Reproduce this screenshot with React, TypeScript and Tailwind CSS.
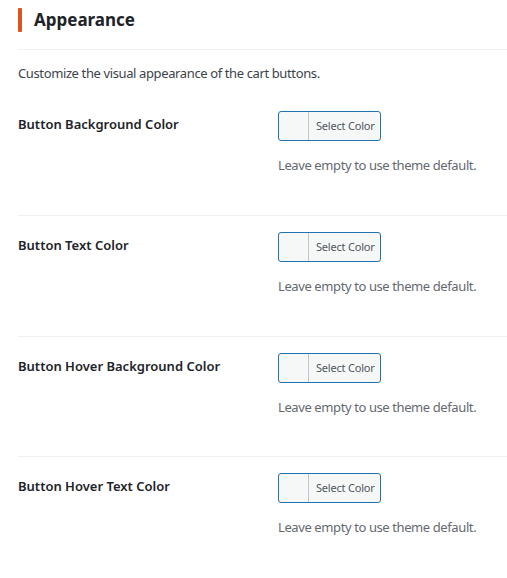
import React from "react";

const rows = [
  { label: "Button Background Color", h: "h-[121px]" },
  { label: "Button Text Color", h: "h-[121px]" },
  { label: "Button Hover Background Color", h: "h-[120px]" },
  { label: "Button Hover Text Color", h: "h-[121px]" },
];

function ColorButton() {
  return (
    <div className="flex h-[30px] w-[103px] overflow-hidden rounded-[3px] border border-[#2271b1] bg-[#f6f7f7]">
      <div className="w-[30px] border-r border-[#c3c4c7]" />
      <div className="flex flex-1 items-center pl-[7px] text-[11px] tracking-[-0.2px] text-[#50575e]">Select Color</div>
    </div>
  );
}

export default function App() {
  return (
    <div className="min-h-[578px] bg-white pl-[18px]" style={{ fontFamily: '"Noto Sans", "Open Sans", sans-serif' }}>
      <div className="flex items-center gap-[12px] border-b border-[#f0f0f1] pt-[8px] pb-[17px]">
        <div className="h-[24px] w-[4px] rounded-[1px] bg-[#d9541e]" />
        <h2 className="text-[17px] font-bold leading-[24px] text-[#1d2327]">Appearance</h2>
      </div>
      <p className="mt-[13px] text-[13px] leading-[20px] tracking-[-0.38px] text-[#3c434a]">
        Customize the visual appearance of the cart buttons.
      </p>
      <div className="mt-[12px]">
        {rows.map((row, i) => (
          <div key={row.label} className={`flex ${row.h} ${i < rows.length - 1 ? "border-b border-[#f0f0f1]" : ""}`}>
            <div className="w-[260px] pt-[19px] text-[13px] font-semibold leading-[20px] text-[#1d2327]">{row.label}</div>
            <div className="pt-[16px]">
              <ColorButton />
              <p className="mt-[14px] text-[13px] leading-[20px] tracking-[-0.4px] text-[#646970]">Leave empty to use theme default.</p>
            </div>
          </div>
        ))}
      </div>
    </div>
  );
}
